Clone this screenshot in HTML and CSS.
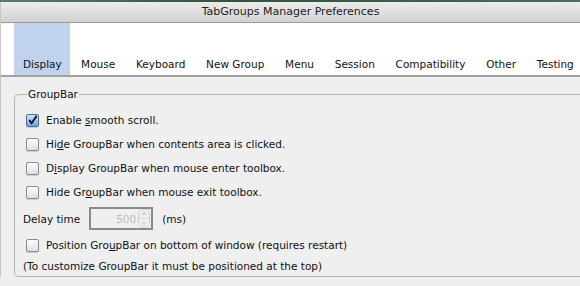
FILE: index.html
```
<!DOCTYPE html>
<html lang="en">
<head>
  <meta charset="UTF-8" />
  <title>TabGroups Manager Preferences</title>
  <link rel="stylesheet" href="styles.css">
</head>
<body>
  <div class="desktop-strip"></div>
  <div class="window">
    <div class="titlebar">TabGroups Manager Preferences</div>

    <div class="tabs">
      <div class="tab active">Display</div>
      <div class="tab">Mouse</div>
      <div class="tab">Keyboard</div>
      <div class="tab">New Group</div>
      <div class="tab">Menu</div>
      <div class="tab">Session</div>
      <div class="tab">Compatibility</div>
      <div class="tab">Other</div>
      <div class="tab">Testing</div>
    </div>

    <div class="pane">
      <fieldset class="groupbox">
        <legend>GroupBar</legend>

        <label class="row">
          <span class="check checked">
            <svg width="12" height="12" viewBox="0 0 12 12"><path d="M2.5 6 L5 9.5 L10.5 1.5" fill="none" stroke="#111" stroke-width="2"/></svg>
          </span>
          <span>Enable <u>s</u>mooth scroll.</span>
        </label>
        <label class="row">
          <span class="check"></span>
          <span>Hi<u>d</u>e GroupBar when contents area is clicked.</span>
        </label>
        <label class="row">
          <span class="check"></span>
          <span>D<u>i</u>splay GroupBar when mouse enter toolbox.</span>
        </label>
        <label class="row">
          <span class="check"></span>
          <span>Hide Gr<u>o</u>upBar when mouse exit toolbox.</span>
        </label>

        <div class="delay">
          <span>Delay time</span>
          <div class="spinner">
            <span class="value">500</span>
            <span class="arrows">
              <svg width="6" height="4" viewBox="0 0 6 4"><path d="M0 4 L3 0 L6 4 Z" fill="#d4d4d4"/></svg>
              <b></b>
              <svg width="6" height="4" viewBox="0 0 6 4"><path d="M0 0 L3 4 L6 0 Z" fill="#d4d4d4"/></svg>
            </span>
          </div>
          <span>(ms)</span>
        </div>

        <label class="row">
          <span class="check"></span>
          <span>Position Gro<u>u</u>pBar on bottom of window (requires restart)</span>
        </label>
        <div class="note">(To customize GroupBar it must be positioned at the top)</div>
      </fieldset>
    </div>
  </div>
</body>
</html>
```

FILE: styles.css
```
body {
  margin: 0;
  width: 580px;
  height: 286px;
  overflow: hidden;
  font-family: "DejaVu Sans", sans-serif;
  font-size: 10.5px;
  color: #111;
  background: #efefef;
}

.desktop-strip {
  height: 2px;
  background: linear-gradient(to right, #5b7c68, #34503f 40%, #4d6d58);
}

.window {
  border-left: 1px solid #c8c8c8;
}

.titlebar {
  height: 20px;
  line-height: 20px;
  text-align: center;
  font-size: 11px;
  color: #222;
  background: linear-gradient(#ececec, #d2d2d2);
  border-bottom: 1px solid #9a9a9a;
}

.tabs {
  display: flex;
  height: 52px;
  padding-left: 13px;
  background: #fff;
  border-bottom: 2px solid #a2a2a2;
}

.tab {
  display: flex;
  align-items: flex-end;
  padding: 0 10.4px 5px 10.4px;
  white-space: nowrap;
  color: #111;
}

.tab.active {
  padding: 0 8px 5px 9px;
  margin-right: 1px;
  background: #c1d3ec;
}

.pane {
  padding: 11px 0 0 13px;
}

.groupbox {
  margin: 0;
  padding: 8px 0 0 8px;
  height: 179px;
  border: 1px solid #b4b4b4;
  border-right: none;
  border-radius: 5px 0 0 5px;
}

.groupbox legend {
  padding: 0 1px;
  margin-left: 4px;
}

.row {
  display: flex;
  align-items: center;
  height: 24px;
  gap: 7px;
  padding-left: 3px;
  white-space: nowrap;
}

.row u {
  text-decoration: underline;
}

.check {
  width: 11px;
  height: 11px;
  border: 1px solid #8a8a8a;
  border-radius: 2px;
  background: linear-gradient(#fdfdfd, #e0e0e0);
  box-shadow: 0 1px 1px rgba(0,0,0,0.15);
  display: flex;
  align-items: center;
  justify-content: center;
}

.check.checked {
  background: linear-gradient(#cfe4fb, #6fa4e0);
  border-color: #4b6f9e;
}

.delay {
  display: flex;
  align-items: center;
  height: 29px;
  gap: 9px;
}

.spinner {
  display: flex;
  align-items: center;
  width: 60px;
  height: 19px;
  border: 2px solid #8a8a8a;
  background: #efefef;
}

.spinner .value {
  flex: 1;
  text-align: right;
  color: #bcbcbc;
  padding-right: 2px;
}

.spinner .arrows {
  width: 10px;
  height: 17px;
  border: 1px solid #d0d0d0;
  border-radius: 5px;
  display: flex;
  flex-direction: column;
  align-items: center;
  justify-content: space-around;
  margin-right: 1px;
}

.spinner .arrows b {
  width: 100%;
  height: 1px;
  background: #dadada;
}

.note {
  height: 19px;
  line-height: 19px;
}
```
